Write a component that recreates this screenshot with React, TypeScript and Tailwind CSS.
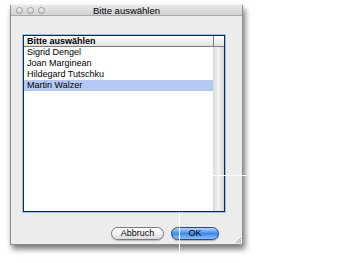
const rows = ["Sigrid Dengel", "Joan Marginean", "Hildegard Tutschku", "Martin Walzer"];

function TrafficLight() {
  return (
    <span className="block h-[7px] w-[7px] rounded-full border border-[#9a9a9a] bg-gradient-to-b from-[#f4f4f4] to-[#cfcfcf]" />
  );
}

export default function App() {
  return (
    <div
      className="relative h-[263px] w-[346px] overflow-hidden bg-white pl-[10px] pt-[5px] text-black"
      style={{ fontFamily: '"Liberation Sans", Arial, sans-serif' }}
    >
      {/* sheet window */}
      <div className="flex h-[240px] w-[233px] flex-col border-x border-b border-[#8c8c8c] bg-[#ececec] shadow-[2px_4px_6px_rgba(0,0,0,0.55)]">
        {/* title bar */}
        <div className="relative flex h-[11px] items-center border-b border-[#a8a8a8] bg-gradient-to-b from-[#e8e8e8] to-[#d2d2d2] px-[5px]">
          <div className="flex gap-[4px]">
            <TrafficLight />
            <TrafficLight />
            <TrafficLight />
          </div>
          <span className="absolute left-0 right-0 text-center text-[9.5px] leading-[11px]">Bitte auswählen</span>
        </div>

        {/* list box */}
        <div className="ml-[11px] mt-[18px] h-[179px] w-[204px] border border-[#8fc4f5]">
          <div className="flex h-full flex-col border border-[#1c2540] bg-white">
            <div className="flex h-[11px] border-b border-[#7a7a7a] bg-gradient-to-b from-white to-[#e2e2e2]">
              <div className="flex-1 pl-[3px] text-[9px] font-bold leading-[10px]">Bitte auswählen</div>
              <div className="w-[11px] border-l border-[#7a7a7a]" />
            </div>
            <div className="flex flex-1">
              <div className="flex-1">
                {rows.map((r, i) => (
                  <div
                    key={r}
                    className={
                      "h-[11px] pl-[3px] text-[9px] leading-[11px] " +
                      (i === rows.length - 1 ? "bg-[#b6c8f2]" : "")
                    }
                  >
                    {r}
                  </div>
                ))}
              </div>
              <div className="w-[11px] bg-gradient-to-r from-[#d8d8d8] via-[#f4f4f4] to-[#d4d4d4]" />
            </div>
          </div>
        </div>

        {/* buttons */}
        <div className="mt-auto mb-[4px] flex justify-end gap-[7px] pr-[23px]">
          <button className="h-[13px] w-[53px] rounded-full border border-[#7c7c7c] bg-gradient-to-b from-white via-[#f0f0f0] to-[#dcdcdc] text-[9px] leading-[11px] shadow-[0_1px_1px_rgba(0,0,0,0.2)]">
            Abbruch
          </button>
          <button className="h-[13px] w-[48px] rounded-full border border-[#26478a] bg-gradient-to-b from-[#b9d8fa] via-[#3f88e6] to-[#8cc2f5] text-[9px] leading-[11px] shadow-[0_1px_1px_rgba(0,0,0,0.25)]">
            OK
          </button>
        </div>
      </div>

      {/* resize grip */}
      <svg className="absolute left-[235px] top-[237px]" width="6" height="6" viewBox="0 0 6 6">
        <path d="M1 6 L6 1 M3 6 L6 3 M5 6 L6 5" stroke="#999" strokeWidth="0.8" />
      </svg>

      {/* guide lines over the shot */}
      <div className="absolute left-[179px] top-[212px] h-[51px] w-px bg-white" />
      <div className="absolute left-[212px] top-[175px] h-px w-[35px] bg-white" />
    </div>
  );
}
